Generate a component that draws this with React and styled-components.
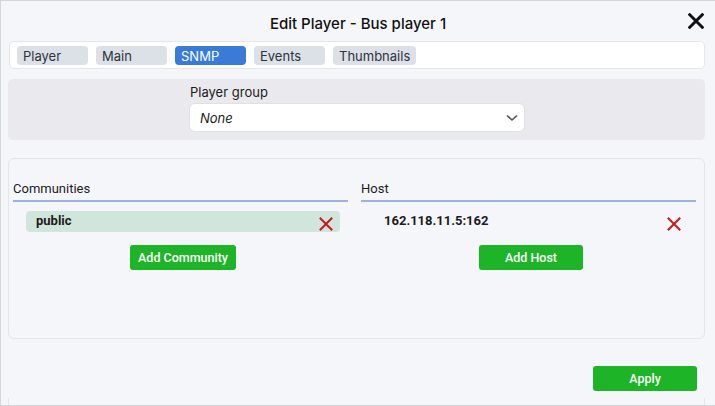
import React from "react";
import styled, { createGlobalStyle } from "styled-components";

const GlobalStyle = createGlobalStyle`
  html, body {
    margin: 0;
    padding: 0;
    background: #f5f6fa;
  }
  * {
    box-sizing: border-box;
  }
`;

const tabs = ["Player", "Main", "SNMP", "Events", "Thumbnails"];

const CrossIcon = ({ size = 14, color = "#c8191e", stroke = 2 }) => (
  <svg width={size} height={size} viewBox="0 0 14 14">
    <path d="M1.5 1.5 L12.5 12.5 M12.5 1.5 L1.5 12.5" stroke={color} strokeWidth={stroke} strokeLinecap="square" />
  </svg>
);

const App = () => {
  return (
    <Page>
      <GlobalStyle />
      <Header>
        <Title>Edit Player - Bus player 1</Title>
        <CloseButton>
          <CrossIcon size={16} color="#111" stroke={2.6} />
        </CloseButton>
      </Header>

      <TabBar>
        {tabs.map((t) => (
          <Tab key={t} $active={t === "SNMP"}>
            {t}
          </Tab>
        ))}
      </TabBar>

      <GroupPanel>
        <Field>
          <Label>Player group</Label>
          <Select>
            <span>None</span>
            <svg width="12" height="8" viewBox="0 0 12 8">
              <path d="M1 1.5 L6 6 L11 1.5" fill="none" stroke="#555" strokeWidth="1.6" />
            </svg>
          </Select>
        </Field>
      </GroupPanel>

      <SnmpPanel>
        <Column>
          <ColumnHeader>Communities</ColumnHeader>
          <ItemRow $filled>
            <span>public</span>
            <CrossIcon />
          </ItemRow>
          <ButtonRow>
            <GreenButton>Add Community</GreenButton>
          </ButtonRow>
        </Column>
        <Column>
          <ColumnHeader>Host</ColumnHeader>
          <ItemRow>
            <span>162.118.11.5:162</span>
            <CrossIcon />
          </ItemRow>
          <ButtonRow>
            <GreenButton>Add Host</GreenButton>
          </ButtonRow>
        </Column>
      </SnmpPanel>

      <Footer>
        <GreenButton>Apply</GreenButton>
      </Footer>
      <BottomStub />
    </Page>
  );
};

export default App;

const Page = styled.div`
  width: 715px;
  height: 406px;
  overflow: hidden;
  border: 1px solid #d6d6d8;
  border-right: none;
  background: #f5f6fa;
  font-family: Inter, "Noto Sans", sans-serif;
  color: #1c1c1c;
`;

const Header = styled.div`
  position: relative;
  height: 40px;
  display: flex;
  align-items: center;
  justify-content: center;
  padding-top: 4px;
`;

const Title = styled.div`
  font-size: 15px;
  font-weight: 500;
  color: #111;
`;

const CloseButton = styled.div`
  position: absolute;
  right: 11px;
  top: 12px;
  display: flex;
`;

const TabBar = styled.div`
  margin: 0 10px 0 8px;
  height: 28px;
  background: #fff;
  border: 1px solid #e4e6ea;
  border-radius: 5px;
  display: flex;
  align-items: center;
  gap: 8px;
  padding: 0 7px;
`;

const Tab = styled.div`
  min-width: 71px;
  height: 19px;
  padding: 0 6px;
  border-radius: 4px;
  font-size: 13px;
  line-height: 20px;
  background: ${(p) => (p.$active ? "#3a7bd8" : "#dce1e7")};
  color: ${(p) => (p.$active ? "#fff" : "#2c3340")};
`;

const GroupPanel = styled.div`
  margin: 10px 10px 0 7px;
  height: 61px;
  background: #e9e9ee;
  border-radius: 5px;
  padding: 5px 0 0 181px;
`;

const Field = styled.div`
  display: flex;
  flex-direction: column;
  gap: 3px;
  width: 336px;
`;

const Label = styled.div`
  font-size: 13px;
  line-height: 16px;
  padding-left: 1px;
  color: #1c1c1c;
`;

const Select = styled.div`
  height: 29px;
  background: #fff;
  border: 1px solid #dde0e6;
  border-radius: 6px;
  display: flex;
  align-items: center;
  justify-content: space-between;
  padding: 0 6px 0 10px;
  font-size: 13px;
  font-style: italic;
  color: #1c1c1c;
`;

const SnmpPanel = styled.div`
  margin: 18px 10px 0 7px;
  height: 181px;
  border: 1px solid #e3e5ea;
  border-radius: 6px;
  display: grid;
  grid-template-columns: 335px 335px;
  grid-template-rows: min-content;
  column-gap: 13px;
  padding: 22px 0 0 4px;
`;

const Column = styled.div`
  display: flex;
  flex-direction: column;
`;

const ColumnHeader = styled.div`
  font-family: Roboto, "Liberation Sans", sans-serif;
  font-size: 13px;
  line-height: 16px;
  padding-bottom: 3px;
  border-bottom: 2px solid #9fb0e2;
  color: #1c1c1c;
`;

const ItemRow = styled.div`
  margin: 9px 8px 0 13px;
  height: 21px;
  border-radius: 4px;
  background: ${(p) => (p.$filled ? "#d0e5db" : "transparent")};
  display: flex;
  align-items: center;
  justify-content: space-between;
  padding: 0 7px 0 10px;
  font-family: Roboto, "Liberation Sans", sans-serif;
  font-size: 13px;
  font-weight: 700;
  color: #1c1c1c;

  span {
    margin-top: -2px;
  }

  svg {
    margin-top: 5px;
  }
`;

const ButtonRow = styled.div`
  margin: 13px 8px 0 13px;
  display: flex;
  justify-content: center;
`;

const GreenButton = styled.button`
  height: 25px;
  min-width: 104px;
  padding: 0 8px;
  border: none;
  border-radius: 3px;
  background: #1db527;
  color: #fff;
  font-family: Roboto, "Liberation Sans", sans-serif;
  font-size: 12.5px;
  font-weight: 500;
  cursor: pointer;
`;

const Footer = styled.div`
  margin-top: 27px;
  display: flex;
  justify-content: flex-end;
  padding-right: 18px;
`;

const BottomStub = styled.div`
  margin: 7px 10px 0 7px;
  height: 20px;
  border-left: 1px solid #e3e5ea;
  border-right: 1px solid #e3e5ea;
`;
